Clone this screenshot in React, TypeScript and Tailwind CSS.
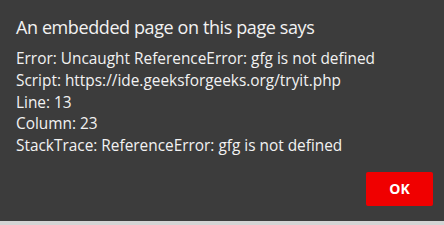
export default function App() {
  const lines = [
    'Error: Uncaught ReferenceError: gfg is not defined',
    'Script: https://ide.geeksforgeeks.org/tryit.php',
    'Line: 13',
    'Column: 23',
    'StackTrace: ReferenceError: gfg is not defined',
  ];

  return (
    <div className="flex h-[225px] w-[444px] flex-col bg-[#3c3c3c] font-['Open_Sans',sans-serif] text-[#f2f2f2]">
      <div className="flex-1 pt-[14px]">
        <div className="px-4">
          <h1 className="text-[18px] leading-[26px] tracking-[-0.4px]">An embedded page on this page says</h1>
          <div className="mt-[8px] text-[15.4px] leading-[21.75px]">
            {lines.map((l, i) => (
              <p key={i}>{l}</p>
            ))}
          </div>
        </div>
        <div className="mt-[15px] flex justify-end pr-[11px]">
          <button className="h-[34px] w-[67px] rounded-[2px] bg-[#f00000] text-[14px] font-bold text-white">
            OK
          </button>
        </div>
      </div>
      <div className="h-[4px] bg-[#d4d4d4]" />
    </div>
  );
}
